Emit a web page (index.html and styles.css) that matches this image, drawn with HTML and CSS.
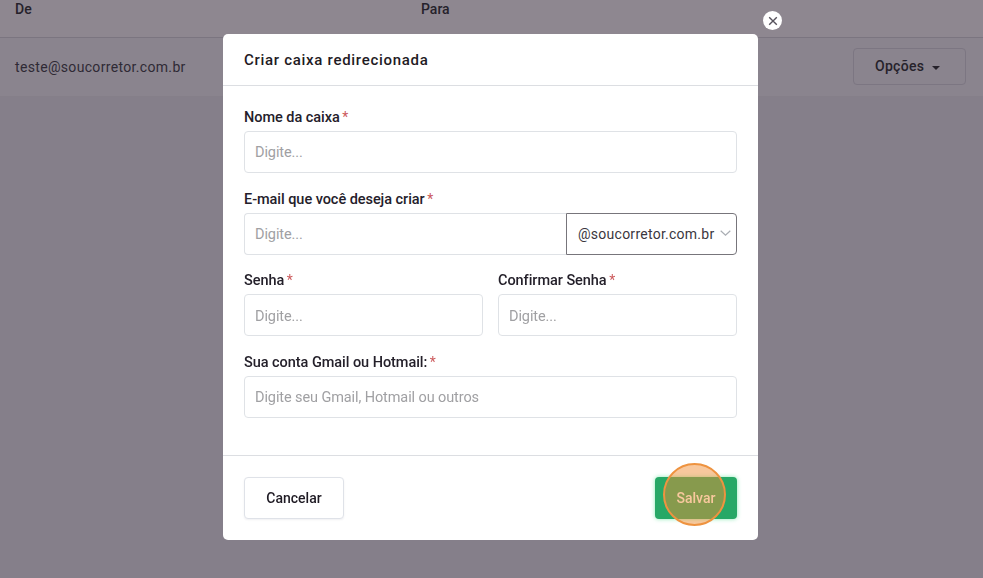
FILE: index.html
```html
<!DOCTYPE html>
<html lang="pt-BR">
<head>
<meta charset="utf-8">
<title>Criar caixa redirecionada</title>
<link rel="stylesheet" href="styles.css">
</head>
<body>
<div class="page">
  <div class="table-head">
    <span class="col-de">De</span>
    <span class="col-para">Para</span>
  </div>
  <div class="table-row">
    <span class="row-email">teste@soucorretor.com.br</span>
    <button class="btn-options" type="button">Opções<span class="caret"></span></button>
  </div>
</div>
<div class="overlay">
  <div class="modal">
    <button class="close" type="button" aria-label="Fechar">
      <svg width="10" height="10" viewBox="0 0 10 10"><path d="M1.2 1.2l7.6 7.6M8.8 1.2L1.2 8.8" stroke="#56525c" stroke-width="1.4" fill="none"/></svg>
    </button>
    <div class="modal-header">Criar caixa redirecionada</div>
    <div class="modal-body">
      <div class="field">
        <label class="label">Nome da caixa <span class="req">*</span></label>
        <div class="input">Digite...</div>
      </div>
      <div class="field">
        <label class="label">E-mail que você deseja criar <span class="req">*</span></label>
        <div class="input-group">
          <div class="input input-left">Digite...</div>
          <div class="select">
            <span>@soucorretor.com.br</span>
            <svg class="chev" width="11" height="6" viewBox="0 0 11 6"><path d="M.7.7l4.8 4.4L10.3.7" stroke="#a9adb3" stroke-width="1.2" fill="none"/></svg>
          </div>
        </div>
      </div>
      <div class="field two">
        <div class="col">
          <label class="label">Senha <span class="req">*</span></label>
          <div class="input">Digite...</div>
        </div>
        <div class="col">
          <label class="label">Confirmar Senha <span class="req">*</span></label>
          <div class="input">Digite...</div>
        </div>
      </div>
      <div class="field">
        <label class="label">Sua conta Gmail ou Hotmail: <span class="req">*</span></label>
        <div class="input">Digite seu Gmail, Hotmail ou outros</div>
      </div>
    </div>
    <div class="modal-footer">
      <button class="btn btn-cancel" type="button">Cancelar</button>
      <button class="btn btn-save" type="button">Salvar</button>
    </div>
    <div class="highlight"></div>
  </div>
</div>
</body>
</html>
```
FILE: styles.css
```css
* { box-sizing: border-box; }
html, body { margin: 0; height: 100%; }
body {
  background: #857f8a;
  font-family: Roboto, "Liberation Sans", sans-serif;
  color: #1f1b24;
  overflow: hidden;
}
.table-head {
  height: 38px;
  background: #8e8790;
  border-bottom: 1px solid #7b7580;
  display: flex;
  padding: 0 15px;
  font-size: 14px;
  font-weight: 500;
  line-height: 18px;
  color: #26222b;
}
.col-de { width: 406px; }
.table-row {
  height: 59px;
  background: #8a848e;
  border-bottom: 1px solid #857f89;
  display: flex;
  align-items: center;
  justify-content: space-between;
  padding: 0 17px 0 15px;
  font-size: 14px;
  letter-spacing: .33px;
  color: #2f2a35;
}
.btn-options {
  width: 113px;
  height: 37px;
  margin-top: -1px;
  padding: 0 0 2px 21px;
  text-align: left;
  background: transparent;
  border: 1px solid #7c7682;
  border-radius: 4px;
  font: 500 14px Roboto, sans-serif;
  color: #26222b;
  letter-spacing: .3px;
}
.caret {
  display: inline-block;
  margin-left: 8px;
  vertical-align: 1px;
  border-left: 4px solid transparent;
  border-right: 4px solid transparent;
  border-top: 4px solid #26222b;
}
.overlay {
  position: fixed;
  inset: 0;
  padding: 34px 225px 0 223px;
}
.modal {
  position: relative;
  width: 535px;
  height: 506px;
  background: #fff;
  border-radius: 5px;
  display: flex;
  flex-direction: column;
}
.close {
  position: absolute;
  top: -23px;
  right: -24px;
  width: 19px;
  height: 19px;
  padding: 0;
  border: 0;
  border-radius: 50%;
  background: #fff;
  display: flex;
  align-items: center;
  justify-content: center;
}
.modal-header {
  height: 52px;
  padding: 1px 21px 0;
  display: flex;
  align-items: center;
  border-bottom: 1px solid #dcdee2;
  font-size: 15px;
  font-weight: 500;
  letter-spacing: .7px;
  color: #1f1b24;
}
.modal-body {
  flex: 1;
  padding: 21px 21px 0;
  display: flex;
  flex-direction: column;
  gap: 15.7px;
}
.label {
  display: block;
  height: 24px;
  font-size: 14.5px;
  font-weight: 500;
  letter-spacing: -.05px;
  line-height: 20px;
  color: #24202a;
}
.req {
  margin-left: -1px;
  font-size: 14px;
  font-weight: 400;
  color: #cc5a5c;
}
.input {
  height: 42px;
  border: 1px solid #dfe2e6;
  border-radius: 4px;
  padding: 1px 10px 0;
  display: flex;
  align-items: center;
  font-size: 14.5px;
  letter-spacing: -.1px;
  color: #a0a0a3;
  background: #fff;
}
.two .input { padding-top: 2px; }
.input-group { display: flex; }
.input-left {
  flex: 1;
  border-right: 0;
  border-radius: 4px 0 0 4px;
}
.select {
  width: 171px;
  height: 42px;
  border: 1px solid #77757b;
  border-radius: 0 4px 4px 0;
  padding: 0 5px 0 11px;
  display: flex;
  align-items: center;
  justify-content: space-between;
  font-size: 14px;
  letter-spacing: .26px;
  color: #3b3740;
}
.chev { margin-top: -2px; }
.two { display: flex; gap: 15px; }
.col { flex: 1; }
.modal-footer {
  height: 85px;
  padding: 21px;
  border-top: 1px solid #dcdee2;
  display: flex;
  justify-content: space-between;
}
.btn {
  height: 42px;
  border-radius: 4px;
  font: 500 14px Roboto, sans-serif;
}
.btn-cancel {
  width: 100px;
  background: #fff;
  border: 1px solid #dfe2e8;
  box-shadow: 0 1px 2px rgba(60, 70, 90, .08);
  color: #1f1b24;
}
.btn-save {
  width: 82px;
  background: #27a866;
  border: 0;
  color: #fff;
  box-shadow: 0 0 4px rgba(60, 220, 130, .6);
}
.highlight {
  position: absolute;
  left: 440px;
  top: 429px;
  width: 63px;
  height: 63px;
  border-radius: 50%;
  border: 2.5px solid #ee9340;
  background: rgba(240, 140, 50, .48);
}
```
